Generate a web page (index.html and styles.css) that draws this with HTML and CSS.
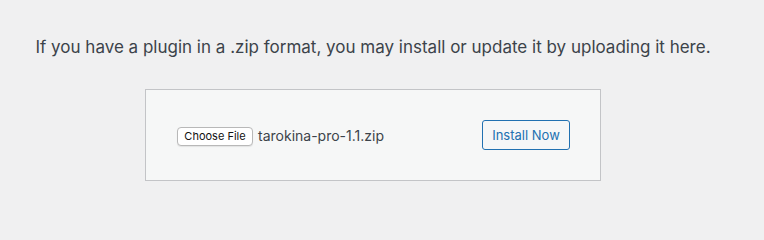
FILE: index.html
```html
<!DOCTYPE html>
<html lang="en">
<head>
    <meta charset="UTF-8">
    <title>Upload Plugin</title>
    <link rel="stylesheet" href="styles.css">
</head>
<body>
    <div class="upload-plugin">
        <p class="install-help">If you have a plugin in a .zip format, you may install or update it by uploading it here.</p>
        <form class="upload-form">
            <div class="file-field">
                <span class="choose-button">Choose File</span>
                <span class="file-name">tarokina-pro-1.1.zip</span>
            </div>
            <button type="button" class="install-button">Install Now</button>
        </form>
    </div>
</body>
</html>
```

FILE: styles.css
```css
/* Basic Reset */
* {
    margin: 0;
    padding: 0;
    box-sizing: border-box;
}

body {
    background: #f0f0f1;
    color: #3c434a;
    font-family: Inter, "Liberation Sans", sans-serif;
}

.upload-plugin {
    width: 746px;
    text-align: center;
    padding-top: 36px;
}

.install-help {
    font-size: 17px;
    line-height: 22px;
}

.upload-form {
    display: inline-flex;
    justify-content: space-between;
    align-items: center;
    width: 456px;
    height: 92px;
    margin-top: 31px;
    padding: 0 30px 0 31px;
    background: #f6f7f7;
    border: 1px solid #c3c4c7;
}

.file-field {
    display: flex;
    align-items: center;
    gap: 5px;
}

.choose-button {
    display: inline-block;
    width: 76px;
    height: 19px;
    margin-top: 2px;
    font-size: 11px;
    line-height: 17px;
    text-align: center;
    color: #111;
    background: #fff;
    border: 1px solid #b8b8b8;
    border-radius: 4px;
    box-shadow: 0 1px 1px rgba(0, 0, 0, 0.08);
}

.file-name {
    font-size: 14px;
    color: #3c434a;
}

.install-button {
    width: 88px;
    height: 30px;
    font-family: inherit;
    font-size: 13px;
    color: #2271b1;
    background: #f6f7f7;
    border: 1px solid #2271b1;
    border-radius: 3px;
    cursor: pointer;
}
```
